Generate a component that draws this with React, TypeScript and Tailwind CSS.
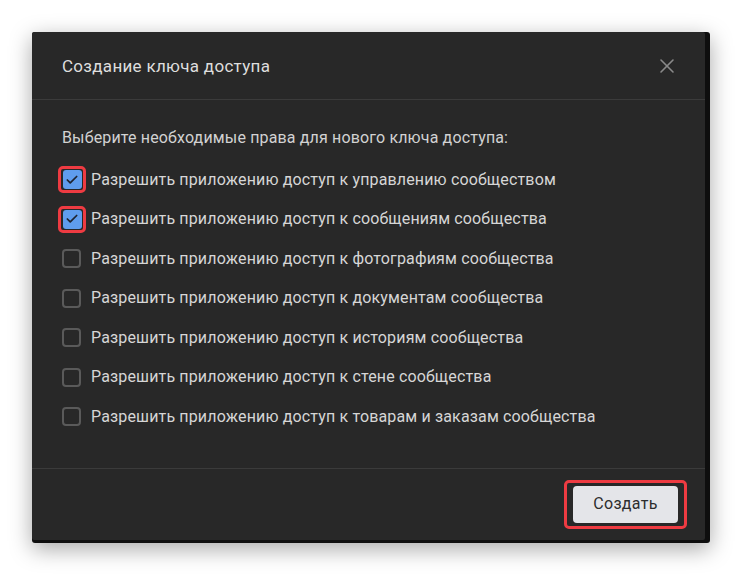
import { X, Check } from "lucide-react";

const permissions = [
  { label: "Разрешить приложению доступ к управлению сообществом", checked: true },
  { label: "Разрешить приложению доступ к сообщениям сообщества", checked: true },
  { label: "Разрешить приложению доступ к фотографиям сообщества", checked: false },
  { label: "Разрешить приложению доступ к документам сообщества", checked: false },
  { label: "Разрешить приложению доступ к историям сообщества", checked: false },
  { label: "Разрешить приложению доступ к стене сообщества", checked: false },
  { label: "Разрешить приложению доступ к товарам и заказам сообщества", checked: false },
];

function Checkbox({ checked }: { checked: boolean }) {
  if (checked) {
    return (
      <span className="-ml-[4px] flex h-[27px] w-[28px] items-center justify-center rounded-[5px] border-[3px] border-[#ee3b42]">
        <span className="flex h-[19px] w-[19px] items-center justify-center rounded-[3px] bg-[#5f9ded]">
          <Check className="h-[14px] w-[14px] text-[#1e2430]" strokeWidth={3} />
        </span>
      </span>
    );
  }
  return <span className="h-[19px] w-[19px] rounded-[4px] border-2 border-[#5a5a5a]" />;
}

export default function App() {
  return (
    <div className="min-h-screen bg-white pl-[32px] pt-[32px] font-['Roboto',sans-serif]">
      <div className="w-[678px] rounded-[3px] bg-[#0e0e0e] pb-[3px] pr-[5px] shadow-[0_6px_22px_rgba(0,0,0,0.35)]">
        <div className="rounded-[2px] bg-[#282828]">
          <div className="flex h-[68px] items-center justify-between border-b border-[#3b3b3b] pl-[30px] pr-[26px] pt-[3px]">
            <span className="text-[17px] tracking-[0.3px] text-[#dedede]">Создание ключа доступа</span>
            <X className="-mt-[3px] h-[24px] w-[24px] text-[#8a8a8a]" strokeWidth={1.6} />
          </div>
          <div className="border-b border-[#3b3b3b] pb-[31px] pl-[30px] pt-[28px]">
            <p className="text-[16px] leading-[20px] tracking-[0.15px] text-[#d2d2d2]">
              Выберите необходимые права для нового ключа доступа:
            </p>
            <div className="pt-[12px]">
              {permissions.map((p) => (
                <div key={p.label} className="flex h-[39.5px] items-center">
                  <div className="flex w-[29px] items-center">
                    <Checkbox checked={p.checked} />
                  </div>
                  <span className="text-[16px] tracking-[0.15px] text-[#d6d6d6]">{p.label}</span>
                </div>
              ))}
            </div>
          </div>
          <div className="flex h-[71px] items-center justify-end pr-[18px]">
            <div className="rounded-[5px] border-[3px] border-[#ee3b42] px-[6px] py-[3px]">
              <button
                type="button"
                className="flex h-[37px] w-[105px] items-center justify-center rounded-[4px] bg-[#e4e5e9] text-[16px] tracking-[0.3px] text-[#2c2d2e]"
              >
                Создать
              </button>
            </div>
          </div>
        </div>
      </div>
    </div>
  );
}
